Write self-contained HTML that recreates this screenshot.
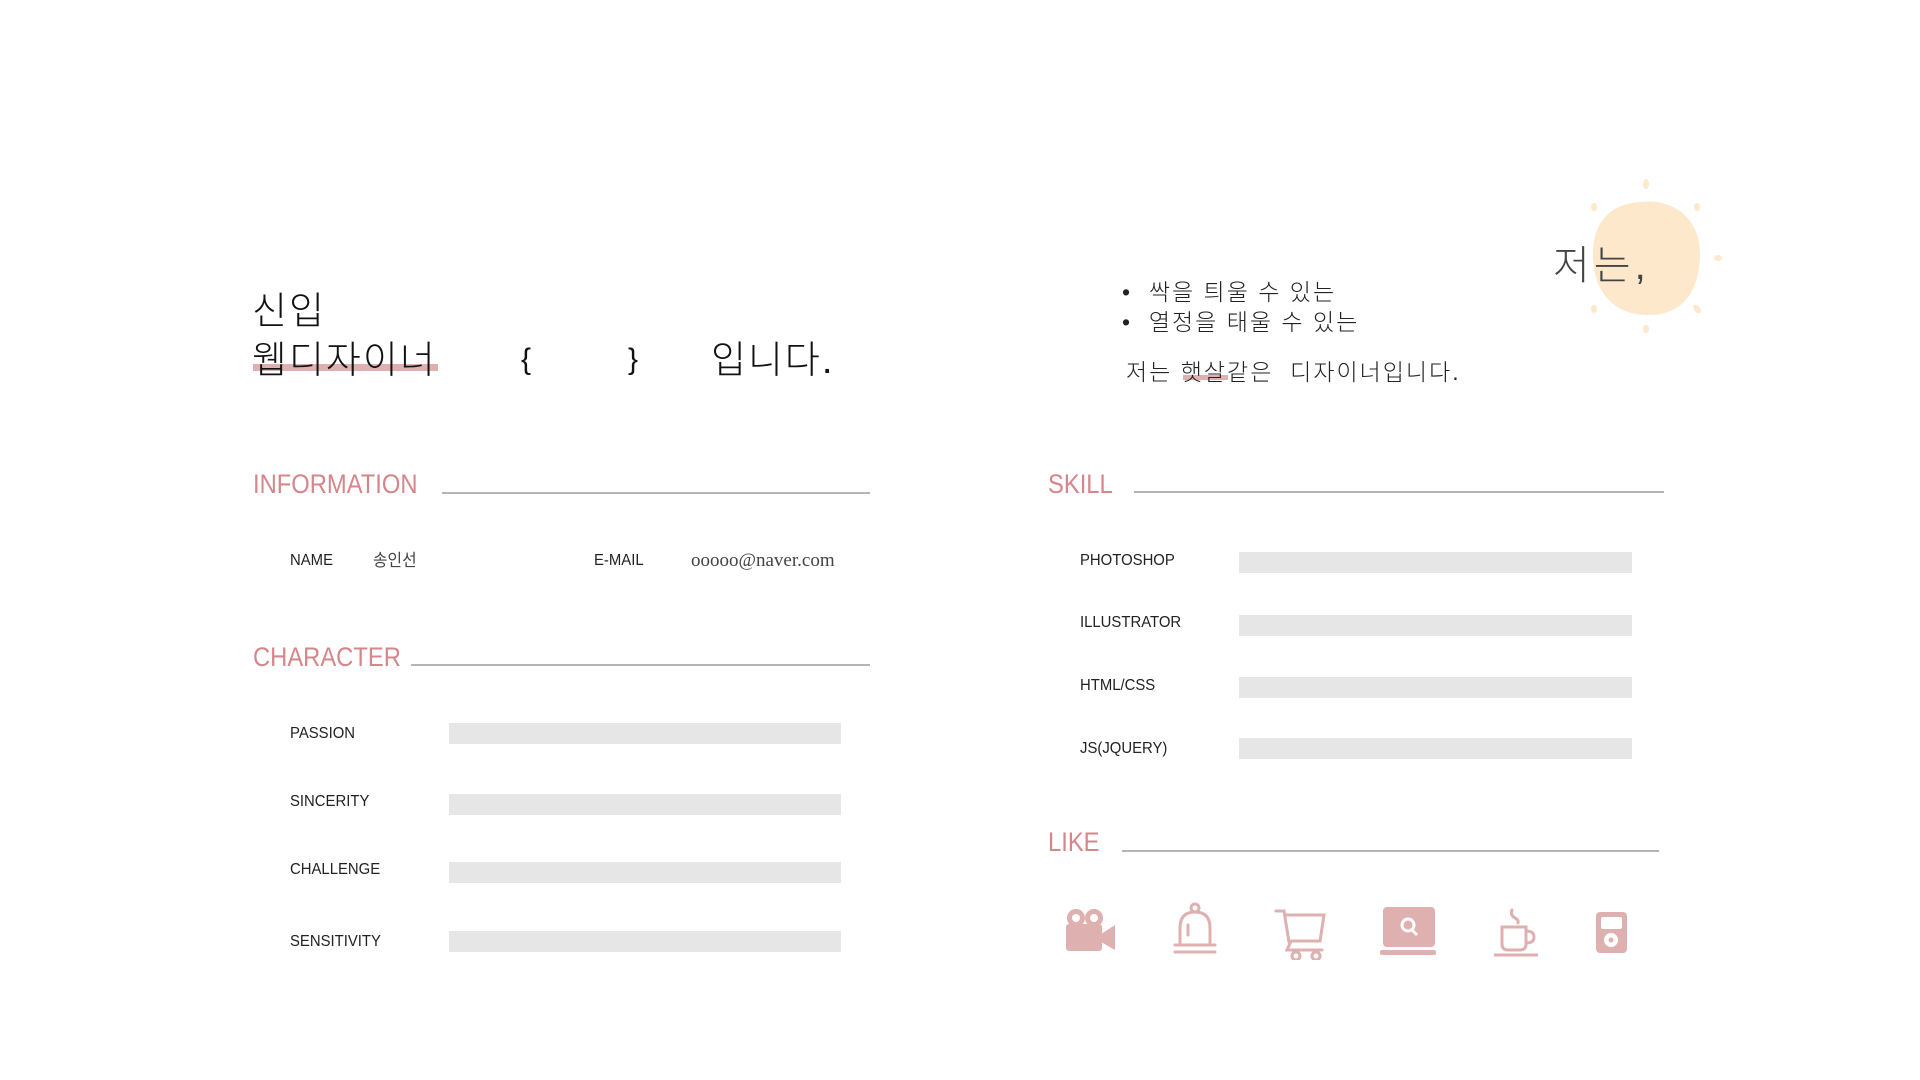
<!DOCTYPE html>
<html><head><meta charset="utf-8"><style>
*{margin:0;padding:0;box-sizing:border-box}
body{width:1920px;height:1080px;background:#fff;position:relative;overflow:hidden;font-family:"Liberation Sans","Noto Sans CJK KR",sans-serif;color:#222}
.a{position:absolute;white-space:nowrap}
.big{font-size:38px;font-weight:300;color:#111;line-height:1;letter-spacing:2px}
.h{font-size:27px;color:#d4868a;line-height:1;transform:scaleX(0.88);transform-origin:left}
.ln{position:absolute;height:2px;background:#b5b5b5}
.lb{font-size:16px;color:#222;line-height:1;transform:scaleX(0.93);transform-origin:left}
.bar{position:absolute;background:#e6e6e6;height:21px}
.k{font-size:23px;font-weight:300;color:#222;line-height:1;letter-spacing:2px}
</style></head><body>
<div class="a" style="left:253px;top:364px;width:185px;height:7px;background:#dfb0b0"></div>
<div class="a big" style="left:252px;top:293px">신입</div>
<div class="a big" style="left:252px;top:342px">웹디자이너</div>
<div class="a big" style="left:521px;top:345px;font-size:30px">{</div>
<div class="a big" style="left:628px;top:345px;font-size:30px">}</div>
<div class="a big" style="left:711px;top:342px">입니다.</div>

<div class="a h" style="left:253px;top:471px">INFORMATION</div>
<div class="ln" style="left:442px;top:492px;width:428px"></div>
<div class="a lb" style="left:290px;top:553px">NAME</div>
<div class="a lb" style="left:373px;top:552px;font-size:17px;color:#444">송인선</div>
<div class="a lb" style="left:594px;top:553px">E-MAIL</div>
<div class="a lb" style="left:691px;top:551px;font-family:'Liberation Serif',serif;font-size:19px;color:#444;transform:none">ooooo@naver.com</div>

<div class="a h" style="left:253px;top:644px">CHARACTER</div>
<div class="ln" style="left:411px;top:664px;width:459px"></div>
<div class="a lb" style="left:290px;top:726px">PASSION</div>
<div class="bar" style="left:449px;top:723px;width:392px"></div>
<div class="a lb" style="left:290px;top:794px">SINCERITY</div>
<div class="bar" style="left:449px;top:794px;width:392px"></div>
<div class="a lb" style="left:290px;top:862px">CHALLENGE</div>
<div class="bar" style="left:449px;top:862px;width:392px"></div>
<div class="a lb" style="left:290px;top:934px">SENSITIVITY</div>
<div class="bar" style="left:449px;top:931px;width:392px"></div>

<svg class="a" style="left:1560px;top:170px" width="180" height="170" viewBox="1560 170 180 170">
<g fill="#fde8cc">
<path d="M1640 202 C1680 198 1702 225 1700 258 C1698 295 1680 316 1646 315 C1612 314 1594 290 1593 258 C1592 222 1610 204 1640 202Z"/>
<ellipse cx="1646" cy="184" rx="3" ry="5"/><ellipse cx="1697" cy="207" rx="3" ry="4"/>
<ellipse cx="1718" cy="258" rx="4" ry="3"/><ellipse cx="1697" cy="309" rx="3" ry="5" transform="rotate(-40 1697 309)"/>
<ellipse cx="1646" cy="329" rx="3" ry="4"/><ellipse cx="1594" cy="309" rx="3" ry="4"/><ellipse cx="1594" cy="207" rx="3" ry="4"/>
</g></svg>
<div class="a" style="left:1553px;top:246px;font-size:40px;font-weight:300;color:#444;line-height:1;letter-spacing:4px">저는,</div>

<div class="a k" style="left:1122px;top:281px">•&nbsp; 싹을 틔울 수 있는</div>
<div class="a k" style="left:1122px;top:311px">•&nbsp; 열정을 태울 수 있는</div>
<div class="a" style="left:1183px;top:375px;width:45px;height:5px;background:#dfb0b0"></div>
<div class="a k" style="left:1126px;top:361px">저는 햇살같은&nbsp; 디자이너입니다.</div>

<div class="a h" style="left:1048px;top:471px">SKILL</div>
<div class="ln" style="left:1134px;top:491px;width:530px"></div>
<div class="a lb" style="left:1080px;top:553px">PHOTOSHOP</div>
<div class="bar" style="left:1239px;top:552px;width:393px"></div>
<div class="a lb" style="left:1080px;top:615px">ILLUSTRATOR</div>
<div class="bar" style="left:1239px;top:615px;width:393px"></div>
<div class="a lb" style="left:1080px;top:678px">HTML/CSS</div>
<div class="bar" style="left:1239px;top:677px;width:393px"></div>
<div class="a lb" style="left:1080px;top:741px">JS(JQUERY)</div>
<div class="bar" style="left:1239px;top:738px;width:393px"></div>

<div class="a h" style="left:1048px;top:829px">LIKE</div>
<div class="ln" style="left:1122px;top:850px;width:537px"></div>

<svg class="a" style="left:1060px;top:900px" width="580" height="60" viewBox="1060 900 580 60">
<g fill="#dfb0b0" stroke="none">
<circle cx="1076" cy="918" r="9"/><circle cx="1094" cy="918" r="9"/>
<rect x="1066" y="924" width="36" height="27" rx="3"/><path d="M1101 934 L1115 925 L1115 950 L1101 942Z"/>
</g>
<g fill="#fff"><circle cx="1076" cy="918" r="4"/><circle cx="1094" cy="918" r="4"/></g>
<g fill="none" stroke="#dfb0b0" stroke-width="3" stroke-linecap="round">
<path d="M1180 945 V928 Q1180 912 1195 912 Q1210 912 1210 928 V945"/>
<circle cx="1195" cy="908" r="4"/><path d="M1175 945 H1215 M1175 952 H1215 M1188 925 V935"/>
<path d="M1276 911 H1284 L1289 942 M1286 915 H1324 L1320 941 H1291 L1287 950 H1322"/>
<circle cx="1296" cy="956" r="4"/><circle cx="1316" cy="956" r="4"/>
<path d="M1494 955 H1538" stroke-linecap="butt"/>
<path d="M1502 927 H1526 V944 Q1526 950 1520 950 H1508 Q1502 950 1502 944Z M1526 931 Q1534 931 1534 937 Q1534 943 1526 943"/>
<path d="M1512 910 Q1510 915 1515 918 Q1519 920 1518 923"/>
</g>
<g fill="#dfb0b0">
<rect x="1383" y="907" width="52" height="40" rx="4"/><rect x="1380" y="950" width="56" height="5" rx="2"/>
<rect x="1596" y="912" width="31" height="41" rx="4"/>
</g>
<g fill="none" stroke="#fff" stroke-width="3">
<circle cx="1408" cy="925" r="6"/><path d="M1412 930 L1417 935"/>
</g>
<g fill="#fff"><rect x="1601" y="917" width="21" height="12" rx="2"/><circle cx="1611" cy="940" r="7"/></g>
<circle cx="1611" cy="940" r="2.5" fill="#dfb0b0"/>
</svg>
</body></html>
